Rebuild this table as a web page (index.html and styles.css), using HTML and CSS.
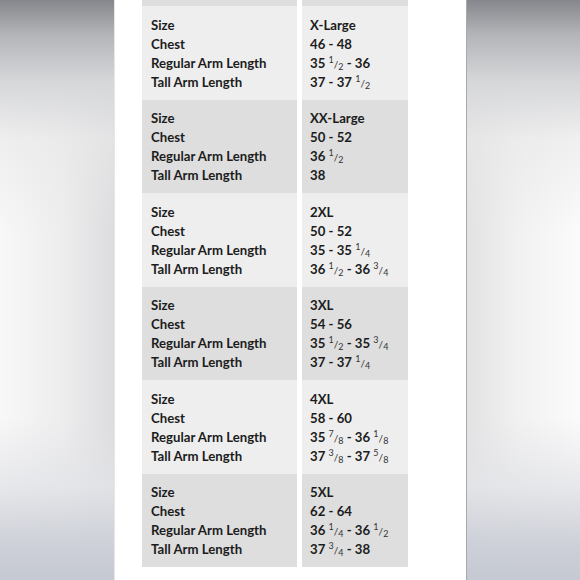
FILE: index.html
```html
<!DOCTYPE html>
<html>
<head>
<meta charset="utf-8">
<link rel="stylesheet" href="styles.css">
</head>
<body>
<div class="page">
  <div class="side side-left"></div>
  <div class="panel">
    <div class="chart">
      <div class="row dark stub"><div class="cell"></div><div class="cell"></div></div>

      <div class="row light">
        <div class="cell labels"><div>Size</div><div>Chest</div><div>Regular Arm Length</div><div>Tall Arm Length</div></div>
        <div class="cell values"><div>X-Large</div><div>46 - 48</div><div>35 <span class="frac"><sup>1</sup>/<sub>2</sub></span> - 36</div><div>37 - 37 <span class="frac"><sup>1</sup>/<sub>2</sub></span></div></div>
      </div>

      <div class="row dark">
        <div class="cell labels"><div>Size</div><div>Chest</div><div>Regular Arm Length</div><div>Tall Arm Length</div></div>
        <div class="cell values"><div>XX-Large</div><div>50 - 52</div><div>36 <span class="frac"><sup>1</sup>/<sub>2</sub></span></div><div>38</div></div>
      </div>

      <div class="row light">
        <div class="cell labels"><div>Size</div><div>Chest</div><div>Regular Arm Length</div><div>Tall Arm Length</div></div>
        <div class="cell values"><div>2XL</div><div>50 - 52</div><div>35 - 35 <span class="frac"><sup>1</sup>/<sub>4</sub></span></div><div>36 <span class="frac"><sup>1</sup>/<sub>2</sub></span> - 36 <span class="frac"><sup>3</sup>/<sub>4</sub></span></div></div>
      </div>

      <div class="row dark">
        <div class="cell labels"><div>Size</div><div>Chest</div><div>Regular Arm Length</div><div>Tall Arm Length</div></div>
        <div class="cell values"><div>3XL</div><div>54 - 56</div><div>35 <span class="frac"><sup>1</sup>/<sub>2</sub></span> - 35 <span class="frac"><sup>3</sup>/<sub>4</sub></span></div><div>37 - 37 <span class="frac"><sup>1</sup>/<sub>4</sub></span></div></div>
      </div>

      <div class="row light">
        <div class="cell labels"><div>Size</div><div>Chest</div><div>Regular Arm Length</div><div>Tall Arm Length</div></div>
        <div class="cell values"><div>4XL</div><div>58 - 60</div><div>35 <span class="frac"><sup>7</sup>/<sub>8</sub></span> - 36 <span class="frac"><sup>1</sup>/<sub>8</sub></span></div><div>37 <span class="frac"><sup>3</sup>/<sub>8</sub></span> - 37 <span class="frac"><sup>5</sup>/<sub>8</sub></span></div></div>
      </div>

      <div class="row dark">
        <div class="cell labels"><div>Size</div><div>Chest</div><div>Regular Arm Length</div><div>Tall Arm Length</div></div>
        <div class="cell values"><div>5XL</div><div>62 - 64</div><div>36 <span class="frac"><sup>1</sup>/<sub>4</sub></span> - 36 <span class="frac"><sup>1</sup>/<sub>2</sub></span></div><div>37 <span class="frac"><sup>3</sup>/<sub>4</sub></span> - 38</div></div>
      </div>
    </div>
  </div>
  <div class="side side-right"></div>
</div>
</body>
</html>
```

FILE: styles.css
```css
html, body {
  margin: 0;
  padding: 0;
}
body {
  width: 580px;
  height: 580px;
  overflow: hidden;
  font-family: Lato, "Open Sans", sans-serif;
}
.page {
  display: flex;
  width: 580px;
  height: 580px;
}
.side {
  height: 580px;
}
.side-left {
  width: 115px;
  background:
    linear-gradient(180deg, #86878c 0%, #b4b5b9 6%, #d6d7d9 14%, rgba(232,232,233,0.6) 24%, rgba(240,240,241,0) 40%, rgba(240,240,241,0) 72%, rgba(226,227,231,0.8) 84%, #cdd0d8 94%, #c5c9d2 100%),
    linear-gradient(90deg, #f8f8f8 0%, #ededee 55%, #dcdcde 100%);
  box-shadow: inset -1px 0 0 #e6e6e6;
}
.side-right {
  width: 114px;
  background:
    linear-gradient(180deg, #86878c 0%, #b4b5b9 6%, #d6d7d9 14%, rgba(232,232,233,0.6) 24%, rgba(240,240,241,0) 40%, rgba(240,240,241,0) 72%, rgba(226,227,231,0.8) 84%, #cdd0d8 94%, #c5c9d2 100%),
    linear-gradient(90deg, #e2e2e3 0%, #f1f1f1 45%, #fbfbfb 100%);
  box-shadow: inset 1px 0 0 #a9a9ab;
}
.panel {
  width: 351px;
  height: 580px;
  background: #fff;
  padding-left: 27px;
  box-sizing: border-box;
}
.chart {
  width: 266px;
  display: flex;
  flex-direction: column;
}
.row {
  display: grid;
  grid-template-columns: 155px 106px;
  column-gap: 5px;
}
.cell {
  padding: 9.5px 0 8px 9px;
  font-size: 13.2px;
  line-height: 19px;
  font-weight: 700;
  color: #1c1c1c;
}
.values {
  padding-left: 8px;
}
.light .cell {
  background: #eeeeee;
}
.dark .cell {
  background: #dedede;
}
.stub .cell {
  height: 6px;
  padding: 0;
}
.frac {
  font-weight: 400;
  font-size: 10px;
  line-height: 0;
  color: #333;
}
.frac sup, .frac sub {
  font-size: 9px;
  line-height: 0;
  position: relative;
  vertical-align: baseline;
}
.frac sup {
  top: -5px;
}
.frac sub {
  top: 2px;
}
```
